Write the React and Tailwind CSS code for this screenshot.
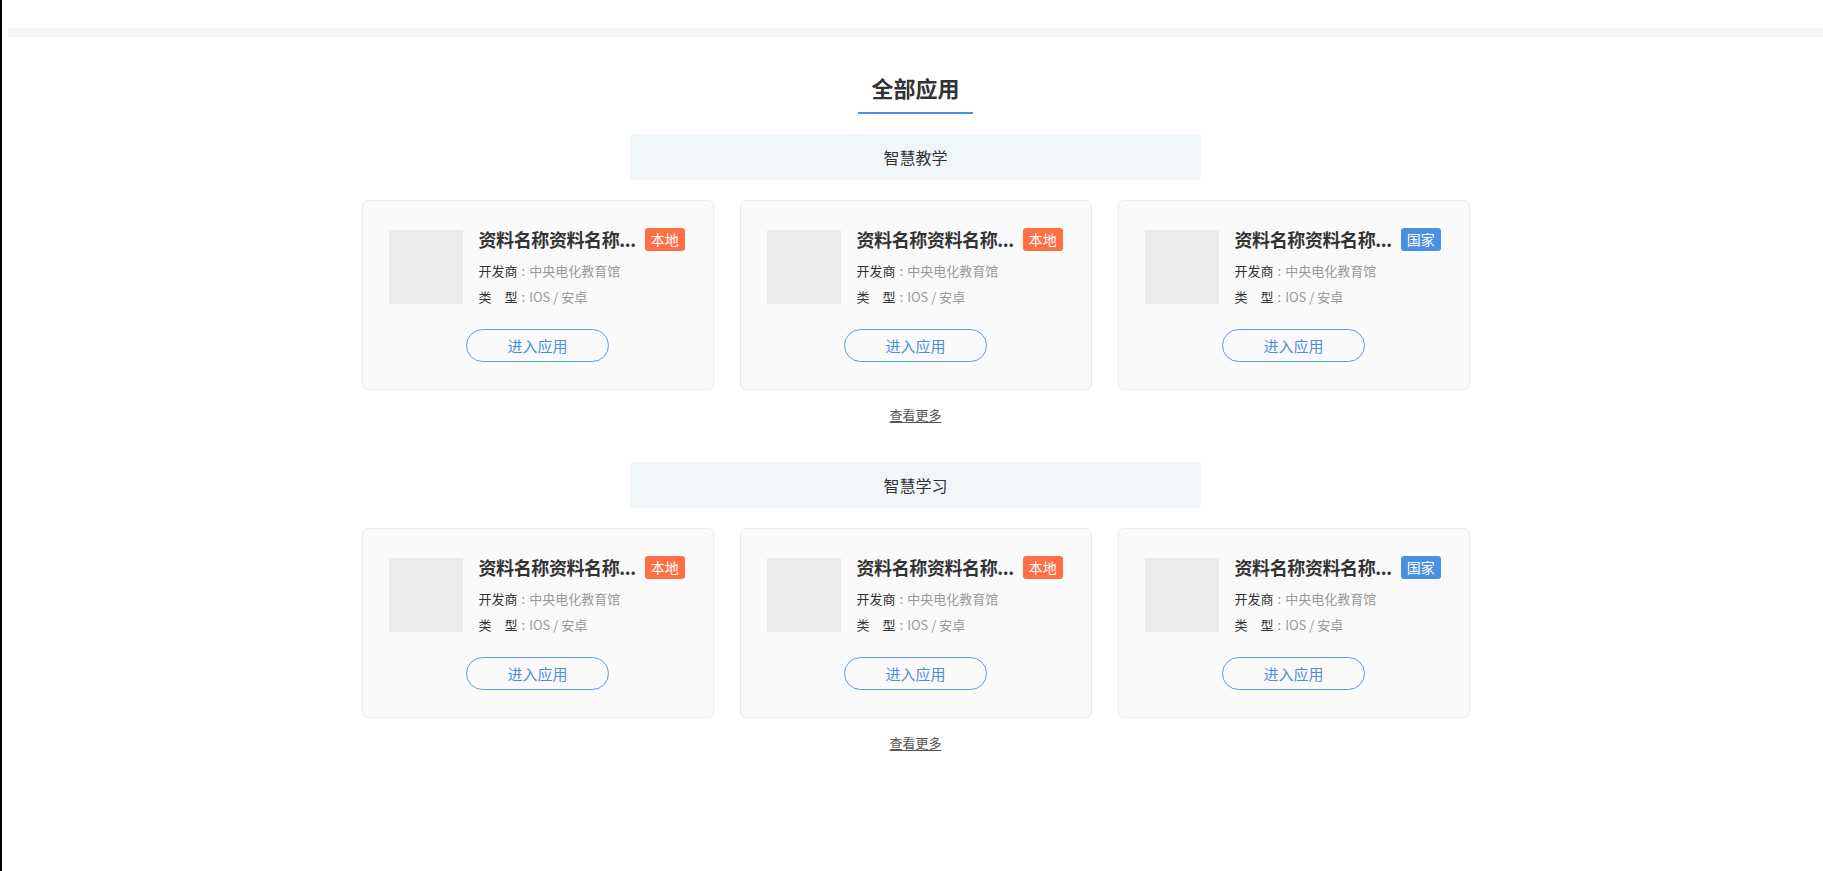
import React from "react";

const font = { fontFamily: '"Noto Sans CJK SC", "Noto Sans", sans-serif' };

const sections = [
  {
    name: "智慧教学",
    apps: [
      { tag: "本地", color: "bg-[#ff6e45]" },
      { tag: "本地", color: "bg-[#ff6e45]" },
      { tag: "国家", color: "bg-[#4a90e2]" },
    ],
  },
  {
    name: "智慧学习",
    apps: [
      { tag: "本地", color: "bg-[#ff6e45]" },
      { tag: "本地", color: "bg-[#ff6e45]" },
      { tag: "国家", color: "bg-[#4a90e2]" },
    ],
  },
];

function AppCard({ tag, color }) {
  return (
    <div className="w-[352px] h-[190px] border border-[#ececec] rounded-md bg-[#fafafa] pt-[29px] px-[26px] pb-[27px] flex flex-col">
      <div className="flex h-[74px]">
        <div className="w-[74px] h-[74px] bg-[#ebebeb] shrink-0" />
        <div className="ml-[16px] -mt-[2px] flex flex-col">
          <div className="flex items-center h-[23px]">
            <span className="text-[18px] leading-[23px] font-semibold text-[#333] whitespace-nowrap tracking-[-0.4px]">
              资料名称资料名称...
            </span>
            <span className={`ml-[9px] shrink-0 whitespace-nowrap h-[23px] px-[6px] rounded-[3px] text-white text-[14px] leading-[23px] ${color}`}>
              {tag}
            </span>
          </div>
          <div className="mt-[8px] text-[13px] leading-[23px] whitespace-nowrap">
            <span className="text-[#333]">开发商</span>
            <span className="text-[#999] mx-[4px]">:</span>
            <span className="text-[#999]">中央电化教育馆</span>
          </div>
          <div className="mt-[3px] text-[13px] leading-[23px] whitespace-nowrap">
            <span className="text-[#333]">类　型</span>
            <span className="text-[#999] mx-[4px]">:</span>
            <span className="text-[#999]">IOS / 安卓</span>
          </div>
        </div>
      </div>
      <button className="mt-[25px] mx-auto w-[143px] h-[33px] rounded-full border border-[#5b9ae2] text-[#4a8fdf] text-[15px] leading-[31px] bg-transparent">
        进入应用
      </button>
    </div>
  );
}

export default function App() {
  return (
    <div className="min-h-screen flex bg-white" style={font}>
      <div className="w-[2px] bg-black shrink-0" />
      <div className="flex-1 pl-[6px] flex flex-col">
        <div className="h-[28px]" />
        <div className="h-[9px] bg-[#f5f5f5]" />
        <div className="flex flex-col items-center">
          <h1 className="mt-[35px] text-[22px] leading-[30px] font-semibold text-[#333]">全部应用</h1>
          <div className="mt-[10px] w-[115px] h-[2px] bg-[#4a90e2]" />
          {sections.map((s, i) => (
            <div key={i} className={`flex flex-col items-center ${i === 0 ? "mt-[20px]" : "mt-[37px]"}`}>
              <div className="w-[571px] h-[46px] rounded-[4px] bg-[#f1f6f9] flex items-center justify-center text-[16px] text-[#333]">
                {s.name}
              </div>
              <div className="mt-[20px] flex gap-[26px]">
                {s.apps.map((a, j) => (
                  <AppCard key={j} {...a} />
                ))}
              </div>
              <a className="mt-[15px] text-[13px] leading-[20px] text-[#555] underline underline-offset-2 cursor-pointer">
                查看更多
              </a>
            </div>
          ))}
        </div>
      </div>
    </div>
  );
}
